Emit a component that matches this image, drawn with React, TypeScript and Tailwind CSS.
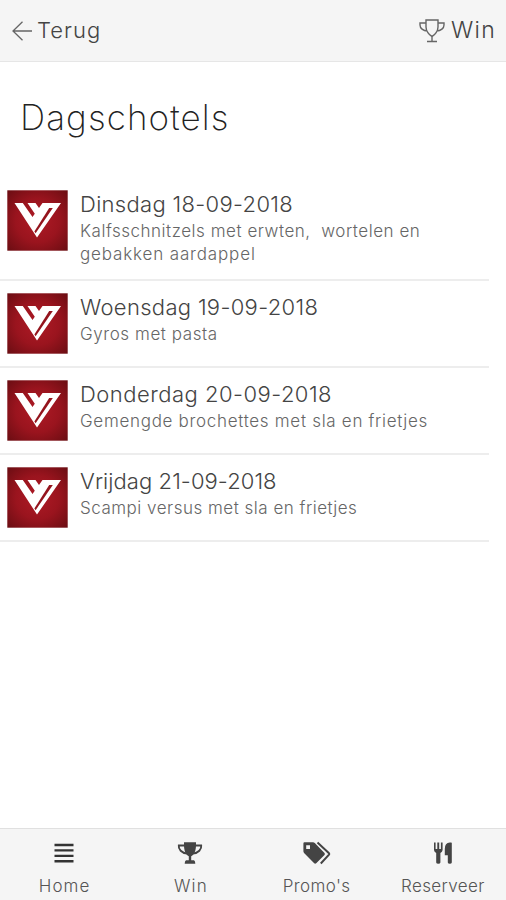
import * as React from "react";

const dishes = [
    { id: 1, title: "Dinsdag 18-09-2018", titleClass: "tracking-[0.32px]", lines: [
        { text: "Kalfsschnitzels met erwten,  wortelen en", className: "tracking-[0.53px]" },
        { text: "gebakken aardappel", className: "tracking-[0.85px]" },
    ] },
    { id: 2, title: "Woensdag 19-09-2018", titleClass: "tracking-[0.32px]", lines: [
        { text: "Gyros met pasta", className: "tracking-[0.57px]" },
    ] },
    { id: 3, title: "Donderdag 20-09-2018", titleClass: "tracking-[0.48px]", lines: [
        { text: "Gemengde brochettes met sla en frietjes", className: "tracking-[0.7px]" },
    ] },
    { id: 4, title: "Vrijdag 21-09-2018", titleClass: "tracking-[0.07px]", lines: [
        { text: "Scampi versus met sla en frietjes", className: "tracking-[0.5px]" },
    ] },
];

const Logo = () => (
    <svg viewBox="0 0 61 61" className="h-[61px] w-[61px] shrink-0">
        <defs>
            <radialGradient id="red" cx="50%" cy="50%" r="72%">
                <stop offset="0" stopColor="#ae1a25" />
                <stop offset="0.5" stopColor="#9a141e" />
                <stop offset="1" stopColor="#680d12" />
            </radialGradient>
        </defs>
        <rect x=".3" y=".3" width="60.4" height="60.4" fill="url(#red)" />
        <path d="M7.5 13H15.8L25.5 27L27.8 23.8L20.5 13H28.5L32 18L35.5 13H54L30 47.5Z" fill="#fff" />
        <path d="M42.2 18H45.8L28.6 43.2L27.4 41.4Z" fill="#94141d" />
    </svg>
);

const MenuIcon = () => (
    <svg viewBox="0 0 28 24" className="h-6 w-7" stroke="#333" strokeWidth="2.4">
        <path d="M4.5 4H23.5M4.5 9.4H23.5M4.5 14.9H23.5M4.5 20.3H23.5" />
    </svg>
);

const TrophyIcon = () => (
    <svg viewBox="0 0 28 24" className="h-6 w-7">
        <path d="M8 1.3H20V4C20 9.5 18.5 13.5 15.2 15.3V19.2H18Q19.3 19.8 19.3 22.8H8.7Q8.7 19.8 10 19.2H12.8V15.3C9.5 13.5 8 9.5 8 4Z" fill="#444" />
        <path d="M9 4.5H2.8C2.2 8 5.5 12.2 11.5 12.6M19 4.5H25.2C25.8 8 22.5 12.2 16.5 12.6" fill="none" stroke="#444" strokeWidth="1.9" />
    </svg>
);

const TagsIcon = () => (
    <svg viewBox="0 0 28 24" className="h-6 w-7" fill="#444">
        <path fillRule="evenodd" d="M1.5 1.3H10Q11 1.3 11.8 2.1L21.5 12Q22.3 13 21.5 14L13.2 22.3Q12.2 23.2 11.2 22.3L1.3 12.2Q.4 11.4 .4 10.3V2.5Q.4 1.3 1.5 1.3ZM3.2 4.2V8H7V4.2Z" />
        <path d="M14.5 1.6L26 12.3Q26.6 13 26 13.7L17.8 22.5" fill="none" stroke="#444" strokeWidth="2" />
    </svg>
);

const CutleryIcon = () => (
    <svg viewBox="0 0 28 24" className="h-6 w-7" fill="#444">
        <path d="M5 1.5H6.6V8H8.3V1.5H10.2V8H11.9V1.5H13.6V9Q13.4 11.2 11.4 12V21.5Q11.2 22.8 9.3 22.8T7.2 21.5V12Q5.2 11.2 5 9ZM22.8 2V21.5Q22.6 22.8 20.8 22.8T18.8 21.5V14.2H15.8V8Q15.8 1.5 20.8 1.5H22.3Z" />
    </svg>
);

const navItems = [
    { label: "Home", Icon: MenuIcon, labelClass: "-mr-[1px] tracking-[1.1px]" },
    { label: "Win", Icon: TrophyIcon, labelClass: "-mr-[1px] tracking-[1.2px]" },
    { label: "Promo's", Icon: TagsIcon, labelClass: "tracking-[0.4px]" },
    { label: "Reserveer", Icon: CutleryIcon, labelClass: "tracking-[0.35px]" },
];

const App = () => (
    <div className="flex h-[900px] w-[506px] flex-col bg-white font-['Inter',sans-serif] font-light text-[#444]">
        <header className="flex h-[62px] shrink-0 items-center justify-between border-b border-[#e6e6e6] bg-[#f5f5f5] pl-3 pr-[11px] text-[22px]">
            <div className="flex items-center">
                <svg viewBox="0 0 20 20" className="mr-[5px] h-5 w-5" fill="none" stroke="#666" strokeWidth="1.3">
                    <path d="M20 10H1M10.5 .8L1 10L10.5 19.2" />
                </svg>
                <span className="tracking-[1px]">Terug</span>
            </div>
            <div className="flex items-center">
                <svg viewBox="0 0 26 24" className="mr-[6px] h-6 w-[26px]" fill="none" stroke="#666" strokeWidth="1.4">
                    <path d="M7 1H19V8C19 12 16 16 13 17.5C10 16 7 12 7 8ZM7 4H1V6C1 9 4 12 8.5 12M19 4H25V6C25 9 22 12 17.5 12M13 17V22M8 22.5H18" />
                </svg>
                <span className="-mr-[1px] text-[23px] tracking-[1.3px]">Win</span>
            </div>
        </header>

        <main className="flex-1">
            <h1 className="px-5 pt-[34px] text-[35px] font-extralight leading-[42px] tracking-[1.1px] text-[#222]">Dagschotels</h1>
            <ul className="mt-10 w-[489px]">
                {dishes.map((dish) => (
                    <li key={dish.id} className="flex border-b-2 border-[#ededed] pb-3 pl-[7px] pt-3">
                        <Logo />
                        <div className="ml-3 pb-[3px]">
                            <h2 className={`whitespace-nowrap text-[22px] leading-7 ${dish.titleClass}`}>{dish.title}</h2>
                            {dish.lines.map((line) => (
                                <p key={line.text} className="h-[23px] text-[17px] leading-[27px] text-[#666]">
                                    <span className={`whitespace-pre ${line.className}`}>{line.text}</span>
                                </p>
                            ))}
                        </div>
                    </li>
                ))}
            </ul>
        </main>

        <nav className="grid h-[72px] shrink-0 grid-cols-4 border-t border-[#e0e0e0] bg-[#f5f5f5] pl-px text-[17px] leading-6">
            {navItems.map(({ label, Icon, labelClass }) => (
                <div key={label} className="flex flex-col items-center pt-3">
                    <Icon />
                    <span className={`mt-[9px] text-[#555] ${labelClass}`}>{label}</span>
                </div>
            ))}
        </nav>
    </div>
);

export default App;
